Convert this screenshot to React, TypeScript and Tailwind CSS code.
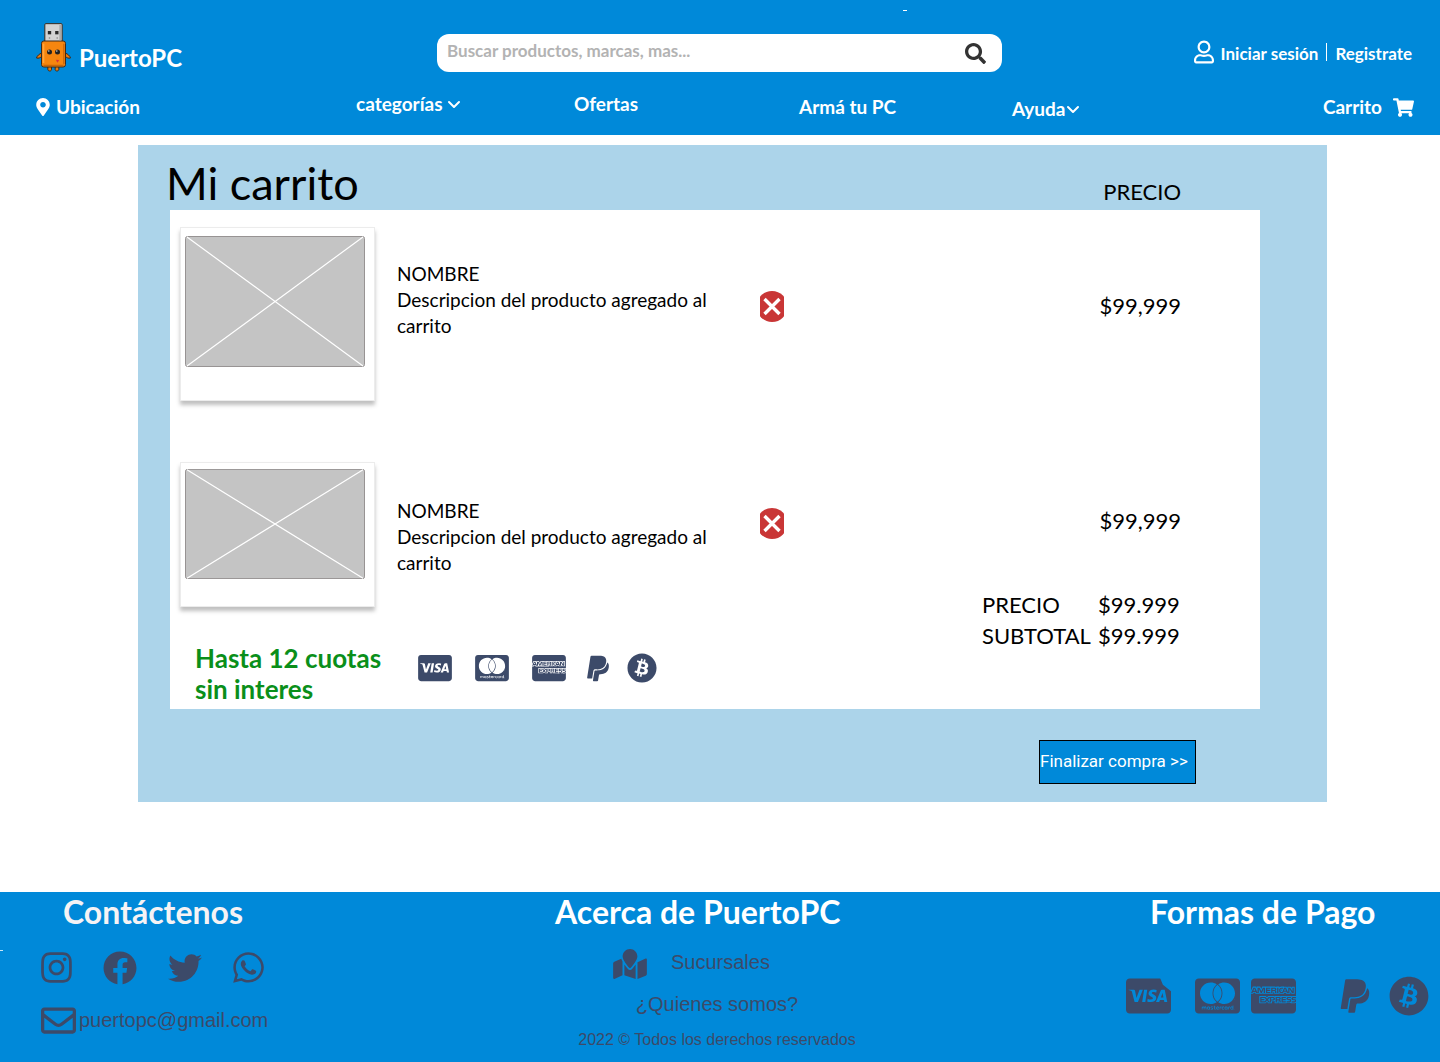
import React from "react";
import {
  FaBitcoin,
  FaCcAmex,
  FaCcMastercard,
  FaCcVisa,
  FaFacebook,
  FaInstagram,
  FaMapMarked,
  FaMapMarkerAlt,
  FaPaypal,
  FaRegEnvelope,
  FaRegUser,
  FaSearch,
  FaShoppingCart,
  FaTwitter,
  FaWhatsapp,
} from "react-icons/fa";

function Mascot() {
  return (
    <svg viewBox="112 70 104 147" className="h-[49px] w-[35px]" aria-hidden="true">
      <g stroke="#3b2a1c" strokeWidth="3" strokeLinejoin="round">
        <path d="M129 160c-8 3-14 8-16 15 6 2 12-1 16-5zM199 160c8 3 14 8 16 15-6 2-12-1-16-5z" fill="#e87a0c" />
        <path d="M147 200v9c0 6 10 7 11 1v-10zM169 200v10c1 6 11 5 11-1v-9z" fill="#e87a0c" />
        <rect x="138" y="72" width="52" height="56" rx="3" fill="#d3d3d3" />
        <rect x="128" y="124" width="72" height="78" rx="7" fill="#f5860f" />
      </g>
      <path d="M184 76v46" stroke="#aaa" strokeWidth="5" />
      <path d="M134 132v58" stroke="#ffa53d" strokeWidth="5" />
      <path d="M195 132v62M134 197h60" stroke="#c9660a" strokeWidth="4" />
      <g fill="#2a2a2a">
        <rect x="147" y="94" width="10" height="10" />
        <rect x="169" y="94" width="10" height="10" />
      </g>
      <g fill="#888">
        <circle cx="152" cy="115" r="2.5" />
        <circle cx="175" cy="115" r="2.5" />
      </g>
      <circle cx="152" cy="157" r="7.5" fill="#222" />
      <circle cx="176" cy="157" r="7.5" fill="#222" />
      <circle cx="150" cy="154" r="2" fill="#fff" />
      <circle cx="174" cy="154" r="2" fill="#fff" />
      <path d="M171 180l10 1-5 8z" fill="#d8343c" />
    </svg>
  );
}

function Chevron() {
  return (
    <svg viewBox="0 0 14 9" className="h-[9px] w-[14px]" fill="none" stroke="currentColor" strokeWidth="2" strokeLinecap="round" strokeLinejoin="round" aria-hidden="true">
      <path d="M2 2l5 5 5-5" />
    </svg>
  );
}

function RemoveButton() {
  return (
    <button type="button" aria-label="Quitar producto" className="block h-[31px] w-6 shrink-0">
      <svg viewBox="0 0 24 31" className="h-full w-full" aria-hidden="true">
        <circle cx="12" cy="15.5" r="15.5" fill="#c93636" />
        <path d="M4.500 8l15 15M19.500 8l-15 15" stroke="#fff" strokeWidth="3.400" />
      </svg>
    </button>
  );
}

function Placeholder({ className }: { className: string }) {
  return (
    <svg viewBox="0 0 180 130" preserveAspectRatio="none" className={className} role="img" aria-label="Imagen del producto">
      <rect x="0.500" y="0.500" width="179" height="129" rx="2" fill="#c4c4c4" stroke="#979393" vectorEffect="non-scaling-stroke" />
      <path d="M2 1l176 128M178 1L2 129" stroke="#fff" strokeWidth="1.200" vectorEffect="non-scaling-stroke" />
    </svg>
  );
}

interface ProductProps {
  cardClass: string;
  imageClass: string;
  textClass: string;
  actionClass: string;
  priceClass: string;
  children?: React.ReactNode;
}

function Product({ cardClass, imageClass, textClass, actionClass, priceClass, children }: ProductProps) {
  return (
    <li className="flex items-start">
      <div className={`w-[195px] shrink-0 border border-[#ececec] bg-white pl-1 shadow-[0_4px_4px_rgba(0,0,0,0.25)] ${cardClass}`}>
        <Placeholder className={`w-[180px] ${imageClass}`} />
      </div>
      <div className={`ml-[22px] w-[363px] shrink-0 text-[19px] leading-[26px] ${textClass}`}>
        <h2>NOMBRE</h2>
        <p className="max-w-[320px]">Descripcion del producto agregado al carrito</p>
      </div>
      <div className={actionClass}>
        <RemoveButton />
      </div>
      <div className={`ml-auto w-[199px] shrink-0 text-[22px] leading-[31px] ${priceClass}`}>
        <p className="text-right">$99,999</p>
        {children}
      </div>
    </li>
  );
}

const display = "font-['Lato',sans-serif] font-bold";

export default function App() {
  return (
    <div className="bg-white font-['Lato',sans-serif] text-black">
      <header className={`relative bg-[#0089d9] pt-[23px] pr-[26px] pb-[15px] pl-9 text-white ${display}`}>
        <span className="absolute top-[10px] left-[63%] ml-[-4px] h-px w-1 bg-white" />
        <div className="grid grid-cols-[401fr_565fr_412fr] items-end">
          <a href="#inicio" className="flex items-end gap-2">
            <Mascot />
            <span className="text-2xl leading-7">PuertoPC</span>
          </a>
          <form className="flex h-[38px] items-center rounded-xl bg-white pr-4 pl-[10px]">
            <input
              type="search"
              aria-label="Buscar productos"
              placeholder="Buscar productos, marcas, mas..."
              className="h-8 min-w-0 grow self-start text-[17px] text-gray-700 outline-none placeholder:text-[#b3b3b3] placeholder:opacity-100"
            />
            <button type="button" aria-label="Buscar">
              <FaSearch className="h-[21px] w-[21px] text-[#333]" />
            </button>
          </form>
          <div className="flex h-10 items-center justify-end pr-0.5 text-[17px]">
            <FaRegUser className="mr-[7px] h-6 w-5" />
            <a href="#sesion" className="pt-1">Iniciar sesión</a>
            <span className="mx-2 h-[18px] w-px bg-white" />
            <a href="#registro" className="pt-1">Registrate</a>
          </div>
        </div>
        <nav className="mt-5 grid h-7 grid-cols-[320fr_218fr_225fr_213fr_200fr_202fr] items-center text-[19px] leading-6">
          <a href="#ubicacion" className="flex items-center gap-1.5">
            <FaMapMarkerAlt className="h-[18px] w-[14px]" />
            Ubicación
          </a>
          <button type="button" className="flex items-center gap-1 pb-1.5">
            categorías
            <Chevron />
          </button>
          <a href="#ofertas" className="pb-1.5">Ofertas</a>
          <a href="#arma">Armá tu PC</a>
          <button type="button" className="flex items-center pt-1">
            Ayuda
            <Chevron />
          </button>
          <a href="#carrito" className="flex items-center justify-end gap-[11px]">
            Carrito
            <FaShoppingCart className="h-[19px] w-[21px]" />
          </a>
        </nav>
      </header>

      <main className="mt-[10px] mr-[113px] ml-[138px] bg-[#acd4ea] pb-[18px]">
        <div className="flex items-baseline justify-between pt-[14px] pr-[146px] pb-0.5 pl-7">
          <h1 className="text-[45px] leading-[48px]">Mi carrito</h1>
          <p className="text-[22px]">PRECIO</p>
        </div>
        <div className="mr-[67px] ml-8 bg-white pt-[17px] pr-[79px] pb-1 pl-[10px]">
          <ul className="flex flex-col gap-[61px]">
            <Product cardClass="h-[174px] pt-2" imageClass="h-[131px]" textClass="pt-[34px]" actionClass="pt-16" priceClass="pt-[63px]" />
            <Product cardClass="h-[145px] pt-1.5" imageClass="h-[110px]" textClass="pt-9" actionClass="pt-[46px]" priceClass="pt-[43px]">
              <dl className="mt-[53px] grid grid-cols-[116px_auto] whitespace-nowrap">
                <dt>PRECIO</dt>
                <dd>$99.999</dd>
                <dt>SUBTOTAL</dt>
                <dd>$99.999</dd>
              </dl>
            </Product>
          </ul>
          <div className="-mt-2 flex items-start pl-[15px]">
            <p className={`w-[223px] text-[26px] leading-[31px] text-[#0a8f1a] ${display}`}>
              Hasta 12 cuotas
              <br />
              sin interes
            </p>
            <div className="flex h-[50px] items-center text-[#3c4a69]">
              <FaCcVisa className="h-[30px] w-[34px]" />
              <FaCcMastercard className="ml-[23px] h-[30px] w-[34px]" />
              <FaCcAmex className="ml-[23px] h-[30px] w-[34px]" />
              <FaPaypal className="ml-5 h-[29px] w-6" />
              <FaBitcoin className="ml-[17px] h-[30px] w-[30px]" />
            </div>
          </div>
        </div>
        <div className="mt-[31px] mr-[131px] flex justify-end">
          <button type="button" className="h-11 w-[157px] border border-black bg-[#0089d9] text-left font-['Roboto',sans-serif] text-[17px] whitespace-nowrap text-white">
            Finalizar compra &gt;&gt;
          </button>
        </div>
      </main>

      <footer className="relative mt-[90px] grid grid-cols-[555fr_571fr_314fr] bg-[#0089d9] pb-[7px] font-['Liberation_Sans',Arial,sans-serif] text-[#3c4a69]">
        <span className="absolute top-[58px] left-0 h-px w-[3px] bg-white/80" />
        <section className="ml-[41px] w-[232px]">
          <h2 className={`pr-2 text-center text-[32px] leading-10 text-[#f5f3f5] ${display}`}>Contáctenos</h2>
          <div className="mt-[18px] flex h-[35px] items-center gap-[31px]">
            <a href="#instagram" aria-label="Instagram"><FaInstagram className="h-[35px] w-[31px]" /></a>
            <a href="#facebook" aria-label="Facebook"><FaFacebook className="h-[34px] w-[34px]" /></a>
            <a href="#twitter" aria-label="Twitter"><FaTwitter className="h-[34px] w-[34px]" /></a>
            <a href="#whatsapp" aria-label="WhatsApp"><FaWhatsapp className="h-[35px] w-[31px]" /></a>
          </div>
          <a href="mailto:puertopc@gmail.com" className="mt-[17px] flex h-9 items-center gap-[3px] text-xl">
            <FaRegEnvelope className="h-[35px] w-[35px]" />
            puertopc@gmail.com
          </a>
        </section>
        <section className="w-[304px]">
          <h2 className={`text-[32px] leading-10 whitespace-nowrap text-white ${display}`}>Acerca de PuertoPC</h2>
          <div className="mt-[9px] flex flex-col items-center pl-5">
            <a href="#sucursales" className="flex h-[42px] items-center gap-6 self-start pl-[38px] text-xl">
              <FaMapMarked className="mt-1 h-[30px] w-[34px]" />
              Sucursales
            </a>
            <a href="#nosotros" className="text-xl leading-[42px]">¿Quienes somos?</a>
            <p className="text-base leading-[30px]">2022 © Todos los derechos reservados</p>
          </div>
        </section>
        <section>
          <h2 className={`pl-6 text-[32px] leading-10 whitespace-nowrap text-white ${display}`}>Formas de Pago</h2>
          <div className="mt-10 flex h-12 items-center">
            <FaCcVisa className="h-10 w-[45px] [clip-path:polygon(0_0,74%_0,82%_22%,100%_38%,100%_100%,0_100%)]" />
            <FaCcMastercard className="ml-6 h-10 w-[45px]" />
            <FaCcAmex className="ml-[11px] h-10 w-[45px]" />
            <FaPaypal className="ml-[43px] h-[38px] w-8" />
            <FaBitcoin className="ml-[18px] h-10 w-10" />
          </div>
        </section>
      </footer>
    </div>
  );
}
